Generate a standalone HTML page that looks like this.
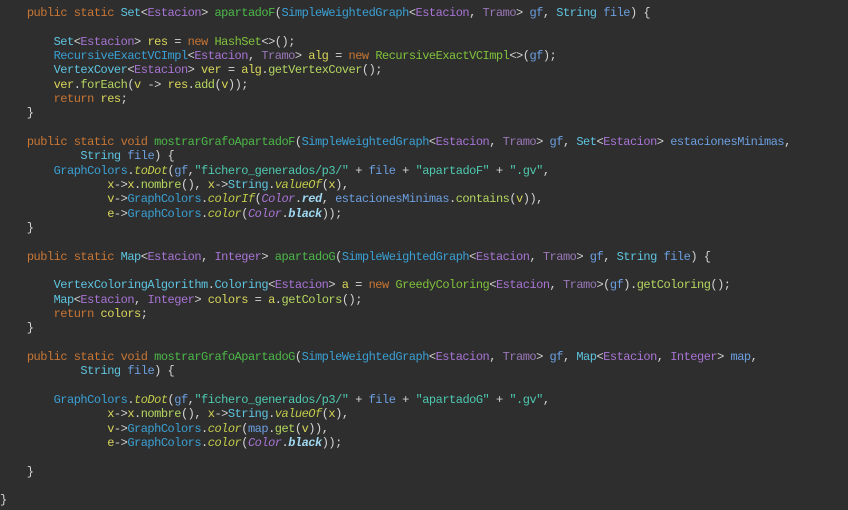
<!DOCTYPE html>
<html><head><meta charset="utf-8"><style>
html,body{margin:0;padding:0;background:#2e2e2e;width:848px;height:510px;overflow:hidden}
pre{margin:0;position:absolute;left:0;top:6px;font-family:"Liberation Mono",monospace;font-size:12px;letter-spacing:-0.5px;line-height:14.33px;color:#d4d4d4;white-space:pre}
.k{color:#c87634}.t{color:#5ec4e0}.b{color:#3aa0d4}.p{color:#a874d4}.tr{color:#9a78b8}
.m{color:#4cb848}.v{color:#d9d65a}.pa{color:#6c9fe0}.s{color:#4ec9b0}.c{color:#b4d660}
.i{color:#c2cc4a;font-style:italic}.ci{color:#a874d4;font-style:italic}.f{color:#9fd8f0;font-style:italic;font-weight:bold}
.n{color:#7fc23b}
</style></head><body><pre>    <span class="k">public static</span> <span class="t">Set</span>&lt;<span class="p">Estacion</span>&gt; <span class="m">apartadoF</span>(<span class="b">SimpleWeightedGraph</span>&lt;<span class="p">Estacion</span>, <span class="tr">Tramo</span>&gt; <span class="pa">gf</span>, <span class="t">String</span> <span class="pa">file</span>) {

        <span class="t">Set</span>&lt;<span class="p">Estacion</span>&gt; <span class="v">res</span> = <span class="k">new</span> <span class="n">HashSet</span>&lt;&gt;();
        <span class="b">RecursiveExactVCImpl</span>&lt;<span class="p">Estacion</span>, <span class="tr">Tramo</span>&gt; <span class="v">alg</span> = <span class="k">new</span> <span class="n">RecursiveExactVCImpl</span>&lt;&gt;(<span class="pa">gf</span>);
        <span class="t">VertexCover</span>&lt;<span class="p">Estacion</span>&gt; <span class="v">ver</span> = <span class="v">alg</span>.<span class="c">getVertexCover</span>();
        <span class="v">ver</span>.<span class="c">forEach</span>(<span class="v">v</span> -&gt; <span class="v">res</span>.<span class="c">add</span>(<span class="v">v</span>));
        <span class="k">return</span> <span class="v">res</span>;
    }

    <span class="k">public static void</span> <span class="m">mostrarGrafoApartadoF</span>(<span class="b">SimpleWeightedGraph</span>&lt;<span class="p">Estacion</span>, <span class="tr">Tramo</span>&gt; <span class="pa">gf</span>, <span class="t">Set</span>&lt;<span class="p">Estacion</span>&gt; <span class="pa">estacionesMinimas</span>,
            <span class="t">String</span> <span class="pa">file</span>) {
        <span class="b">GraphColors</span>.<span class="i">toDot</span>(<span class="pa">gf</span>,<span class="s">"fichero_generados/p3/"</span> + <span class="pa">file</span> + <span class="s">"apartadoF"</span> + <span class="s">".gv"</span>,
                <span class="v">x</span>-&gt;<span class="v">x</span>.<span class="c">nombre</span>(), <span class="v">x</span>-&gt;<span class="t">String</span>.<span class="i">valueOf</span>(<span class="v">x</span>),
                <span class="v">v</span>-&gt;<span class="b">GraphColors</span>.<span class="i">colorIf</span>(<span class="ci">Color</span>.<span class="f">red</span>, <span class="pa">estacionesMinimas</span>.<span class="c">contains</span>(<span class="v">v</span>)),
                <span class="v">e</span>-&gt;<span class="b">GraphColors</span>.<span class="i">color</span>(<span class="ci">Color</span>.<span class="f">black</span>));
    }

    <span class="k">public static</span> <span class="t">Map</span>&lt;<span class="p">Estacion</span>, <span class="p">Integer</span>&gt; <span class="m">apartadoG</span>(<span class="b">SimpleWeightedGraph</span>&lt;<span class="p">Estacion</span>, <span class="tr">Tramo</span>&gt; <span class="pa">gf</span>, <span class="t">String</span> <span class="pa">file</span>) {

        <span class="t">VertexColoringAlgorithm</span>.<span class="t">Coloring</span>&lt;<span class="p">Estacion</span>&gt; <span class="v">a</span> = <span class="k">new</span> <span class="n">GreedyColoring</span>&lt;<span class="p">Estacion</span>, <span class="tr">Tramo</span>&gt;(<span class="pa">gf</span>).<span class="c">getColoring</span>();
        <span class="t">Map</span>&lt;<span class="p">Estacion</span>, <span class="p">Integer</span>&gt; <span class="v">colors</span> = <span class="v">a</span>.<span class="c">getColors</span>();
        <span class="k">return</span> <span class="v">colors</span>;
    }

    <span class="k">public static void</span> <span class="m">mostrarGrafoApartadoG</span>(<span class="b">SimpleWeightedGraph</span>&lt;<span class="p">Estacion</span>, <span class="tr">Tramo</span>&gt; <span class="pa">gf</span>, <span class="t">Map</span>&lt;<span class="p">Estacion</span>, <span class="p">Integer</span>&gt; <span class="pa">map</span>,
            <span class="t">String</span> <span class="pa">file</span>) {

        <span class="b">GraphColors</span>.<span class="i">toDot</span>(<span class="pa">gf</span>,<span class="s">"fichero_generados/p3/"</span> + <span class="pa">file</span> + <span class="s">"apartadoG"</span> + <span class="s">".gv"</span>,
                <span class="v">x</span>-&gt;<span class="v">x</span>.<span class="c">nombre</span>(), <span class="v">x</span>-&gt;<span class="t">String</span>.<span class="i">valueOf</span>(<span class="v">x</span>),
                <span class="v">v</span>-&gt;<span class="b">GraphColors</span>.<span class="i">color</span>(<span class="pa">map</span>.<span class="c">get</span>(<span class="v">v</span>)),
                <span class="v">e</span>-&gt;<span class="b">GraphColors</span>.<span class="i">color</span>(<span class="ci">Color</span>.<span class="f">black</span>));

    }

}</pre></body></html>
